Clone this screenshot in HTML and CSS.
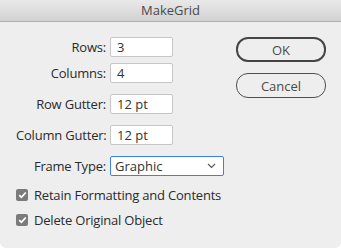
FILE: index.html
```html
<!DOCTYPE html>
<html lang="en">
<head>
    <meta charset="UTF-8">
    <title>MakeGrid</title>
    <link rel="stylesheet" href="styles.css">
</head>
<body>
    <div class="window">
        <div class="titlebar">MakeGrid</div>
        <div class="content">
            <div class="fields">
                <div class="row">
                    <label>Rows:</label>
                    <div class="field">3</div>
                </div>
                <div class="row row-close">
                    <label>Columns:</label>
                    <div class="field">4</div>
                </div>
                <div class="row">
                    <label>Row Gutter:</label>
                    <div class="field">12 pt</div>
                </div>
                <div class="row">
                    <label>Column Gutter:</label>
                    <div class="field">12 pt</div>
                </div>
                <div class="row">
                    <label>Frame Type:</label>
                    <div class="select">
                        <span>Graphic</span>
                        <svg width="9" height="6" viewBox="0 0 9 6"><path d="M1 1 L4.5 4.5 L8 1" fill="none" stroke="#555" stroke-width="1.1"/></svg>
                    </div>
                </div>
                <div class="check first">
                    <span class="box"><svg width="9" height="8" viewBox="0 0 9 8"><path d="M1.2 4.2 L3.4 6.3 L7.8 1.5" fill="none" stroke="#fff" stroke-width="1.8"/></svg></span>
                    Retain Formatting and Contents
                </div>
                <div class="check">
                    <span class="box"><svg width="9" height="8" viewBox="0 0 9 8"><path d="M1.2 4.2 L3.4 6.3 L7.8 1.5" fill="none" stroke="#fff" stroke-width="1.8"/></svg></span>
                    Delete Original Object
                </div>
            </div>
            <div class="buttons">
                <button type="button" class="default">OK</button>
                <button type="button">Cancel</button>
            </div>
        </div>
    </div>
</body>
</html>
```

FILE: styles.css
```css
body {
    margin: 0;
    background: #ffffff;
    font-family: "Open Sans", "Liberation Sans", sans-serif;
    font-size: 13px;
    color: #2b2b2b;
}
.window {
    width: 341px;
    height: 248px;
    background: #eeeeee;
    border-radius: 0 0 6px 6px;
    overflow: hidden;
}
.titlebar {
    height: 21px;
    line-height: 21px;
    text-align: center;
    font-size: 13px;
    color: #4a4a4a;
    background: linear-gradient(#e9e9e9, #d2d2d2);
    border-bottom: 1px solid #aeaeae;
}
.content {
    display: flex;
    padding: 15px 15px 0 16px;
}
.fields {
    width: 220px;
}
.row {
    display: flex;
    align-items: center;
    margin-bottom: 11px;
}
.row-close {
    margin-top: -5px;
}
.row label {
    width: 90px;
    text-align: right;
    margin-right: 4px;
    white-space: nowrap;
    letter-spacing: -0.2px;
}
.field {
    width: 55px;
    height: 18px;
    line-height: 18px;
    padding-left: 6px;
    background: #ffffff;
    border: 1px solid #c6c6c6;
    border-radius: 2px;
    color: #333333;
}
.select {
    width: 101px;
    height: 18px;
    padding: 0 7px 0 4px;
    display: flex;
    align-items: center;
    justify-content: space-between;
    background: #ffffff;
    border: 1px solid #3c82e6;
    border-radius: 2px;
    color: #333333;
}
.check {
    display: flex;
    align-items: center;
    height: 16px;
    margin-bottom: 9px;
    letter-spacing: -0.2px;
}
.check.first {
    margin-top: 6px;
}
.box {
    width: 12px;
    height: 12px;
    margin-right: 6px;
    background: #7b7b7b;
    border-radius: 2px;
    display: flex;
    align-items: center;
    justify-content: center;
}
.buttons {
    display: flex;
    flex-direction: column;
}
button {
    width: 90px;
    height: 25px;
    margin-bottom: 11px;
    background: transparent;
    border: 1px solid #4e4e4e;
    border-radius: 12px;
    font-family: "Open Sans", "Liberation Sans", sans-serif;
    font-size: 13px;
    color: #4a4a4a;
}
button.default {
    border: 2px solid #454545;
}
```
